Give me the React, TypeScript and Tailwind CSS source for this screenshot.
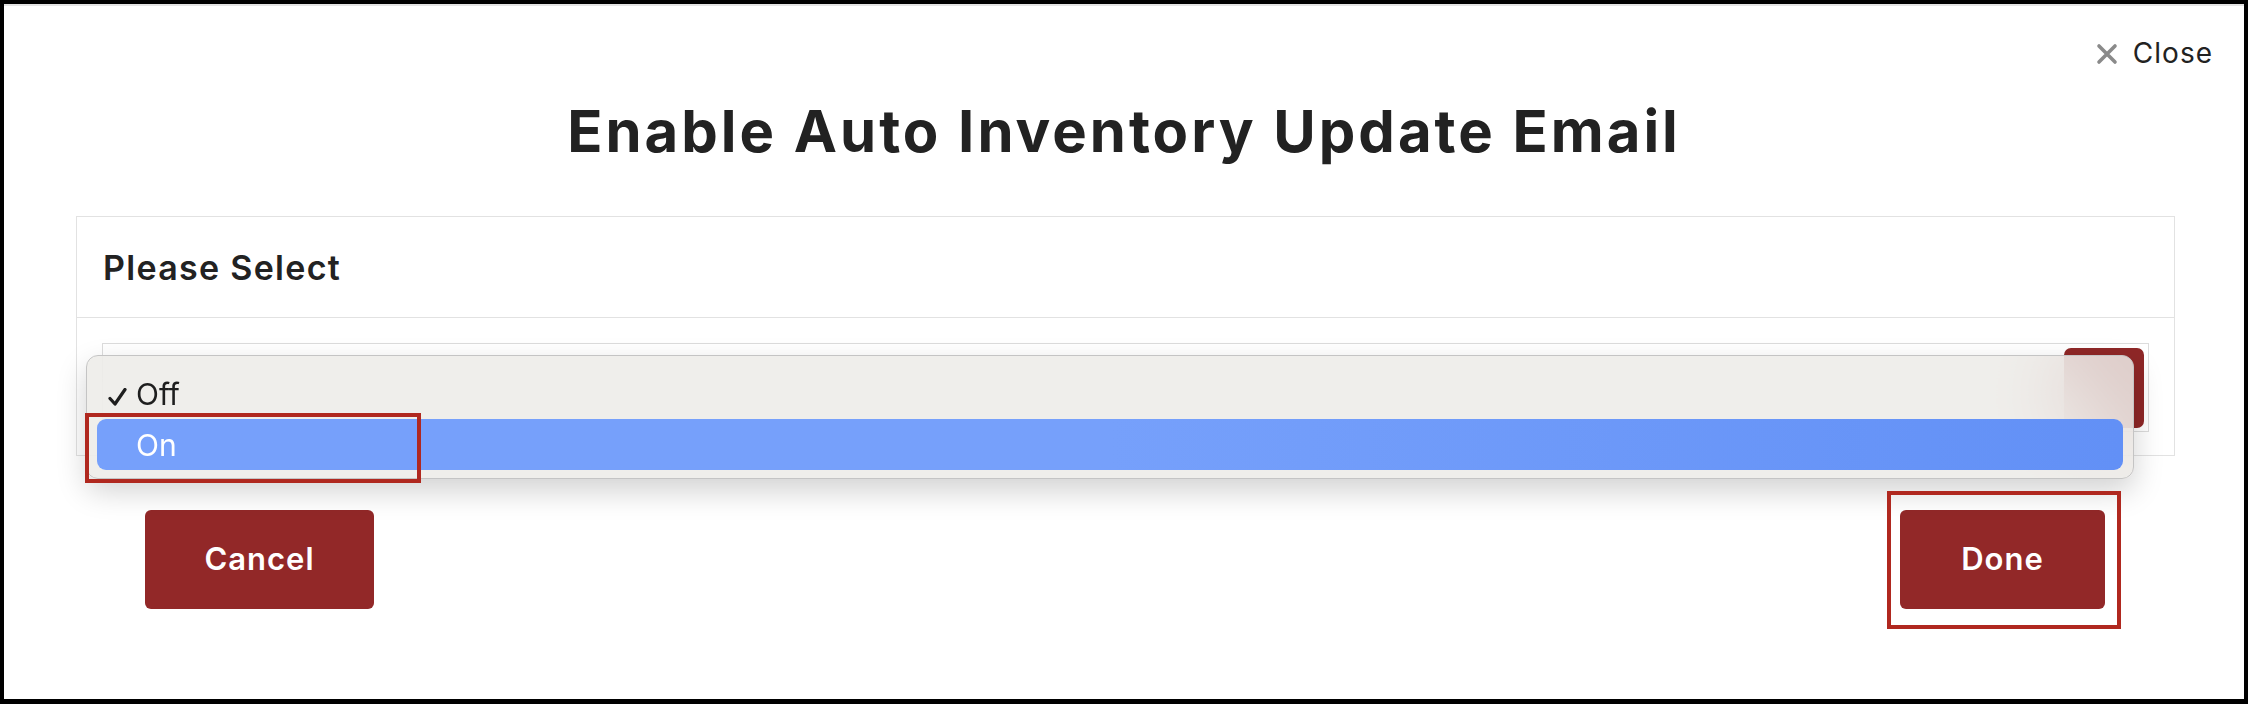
import React from "react";

export default function App() {
  return (
    <div className="relative h-[704px] w-[2248px] bg-black pb-[5px] pl-[4px] pr-[4px] pt-[4px] font-['Inter',_sans-serif]">
      <div className="flex h-full flex-col border-t-2 border-[#e4e4e4] bg-white">
        <div className="flex justify-end pr-[31px] pt-[30px]">
          <button className="flex items-center gap-[15px] text-[28px] leading-[34px] tracking-[1px] text-[#222]">
            <svg width="22" height="22" viewBox="0 0 22 22" className="mt-[2px]">
              <path d="M3 3 L19 19 M19 3 L3 19" stroke="#8a8a8a" strokeWidth="3.6" strokeLinecap="round" />
            </svg>
            <span>Close</span>
          </button>
        </div>
        <h1 className="mt-[32px] text-center text-[58px] font-bold leading-none tracking-[3px] text-[#222]">
          Enable Auto Inventory Update Email
        </h1>
        <div className="ml-[72px] mr-[69px] mt-[56px] border border-[#e2e2e2]">
          <div className="flex h-[101px] items-center border-b border-[#e2e2e2] pl-[26px] text-[34px] font-semibold tracking-[1.3px] text-[#222]">
            Please Select
          </div>
          <div className="px-[25px] pb-[23px] pt-[25px]">
            <div className="flex h-[89px] justify-end border border-[#dcdcdc] bg-white pr-[4px] pt-[4px]">
              <div className="h-[80px] w-[80px] rounded-[7px] bg-[#8f2727]" />
            </div>
          </div>
        </div>
        <div className="mt-[54px] flex justify-between pl-[141px] pr-[139px]">
          <button className="h-[99px] w-[229px] rounded-[6px] bg-[#922828] text-[31px] font-semibold tracking-[1px] text-white">
            Cancel
          </button>
          <button className="h-[99px] w-[205px] rounded-[6px] bg-[#922828] text-[31px] font-semibold tracking-[1px] text-white">
            Done
          </button>
        </div>
      </div>

      {/* dropdown popup */}
      <div className="absolute left-[86px] top-[355px] h-[124px] w-[2048px] rounded-[12px] border border-[#c4c4c4] bg-[#ecebe8]/85 px-[10px] pt-[12px] shadow-[0_12px_30px_rgba(0,0,0,0.18)] backdrop-blur-2xl">
        <div className="flex h-[51px] items-center text-[30px] leading-none text-[#1e1e1e]">
          <span className="flex w-[39px] justify-start pl-[11px] pt-[6px]">
            <svg width="19" height="18" viewBox="0 0 19 18">
              <path d="M2 10.5 L7 16 L17 1.5" fill="none" stroke="#1e1e1e" strokeWidth="3.2" strokeLinecap="round" strokeLinejoin="round" />
            </svg>
          </span>
          <span>Off</span>
        </div>
        <div className="flex h-[51px] items-center rounded-[9px] bg-gradient-to-r from-[#76a0fb] via-[#76a0fb] to-[#6290f6] pl-[39px] text-[30px] leading-none text-white">
          On
        </div>
      </div>

      {/* annotation boxes */}
      <div className="absolute left-[85px] top-[413px] h-[70px] w-[336px] border-4 border-[#b0281f]" />
      <div className="absolute left-[1887px] top-[491px] h-[138px] w-[234px] border-4 border-[#b0281f]" />
    </div>
  );
}
